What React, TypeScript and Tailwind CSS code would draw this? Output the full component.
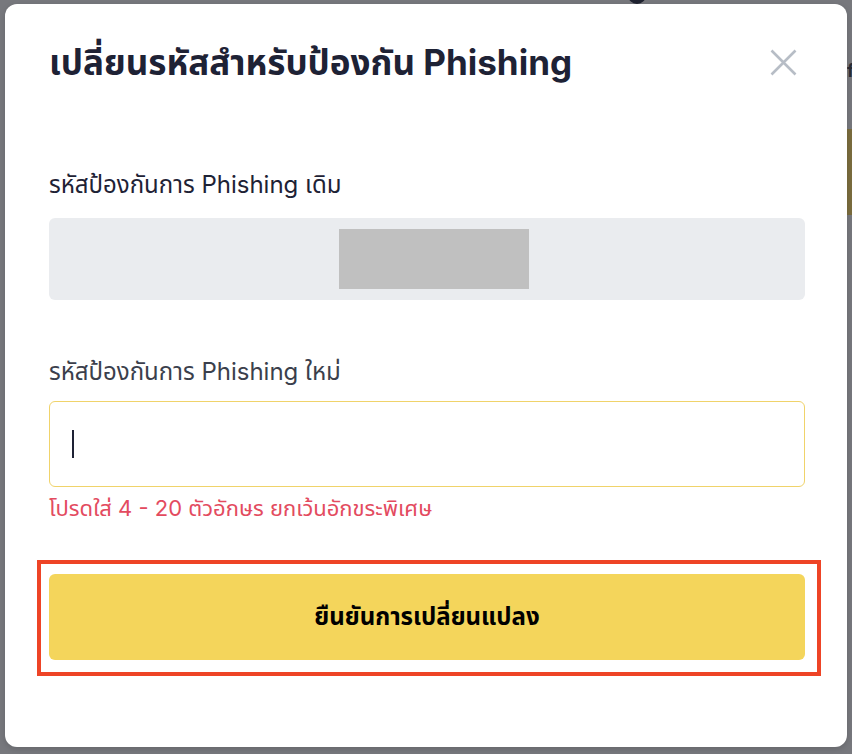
export default function App() {
  return (
    <div
      className="relative w-[852px] h-[754px] overflow-hidden bg-[#77787d]"
      style={{ fontFamily: 'Inter, "Noto Sans Thai", "Noto Sans", "DejaVu Sans", sans-serif' }}
    >
      {/* Page content peeking out behind the overlay */}
      <div className="absolute top-[-14px] left-[628px] w-[18px] h-[18px] rounded-full bg-[#1f2230]" />
      <div className="absolute top-[62px] left-[847px] text-[18px] font-bold text-[#2a2d36] leading-none">f</div>
      <div className="absolute top-[129px] left-[847px] w-[5px] h-[86px] bg-[#7b6d3e]" />

      <div className="relative flex justify-center pt-[4px]">
        <div className="w-[842px] h-[743px] rounded-[12px] bg-white shadow-[0_2px_6px_rgba(0,0,0,0.15)] pl-[44px] pr-[42px] pt-[38px]">
          {/* Header */}
          <div className="flex items-center justify-between">
            <h1 className="text-[35px] leading-[40px] font-bold text-[#1e2235]">
              เปลี่ยนรหัสสำหรับป้องกัน Phishing
            </h1>
            <button className="mr-[8px] text-[#b7bdc6]">
              <svg width="27" height="27" viewBox="0 0 27 27" fill="none" stroke="currentColor" strokeWidth="2.6">
                <path d="M1.5 1.5L25.5 25.5M25.5 1.5L1.5 25.5" />
              </svg>
            </button>
          </div>

          {/* Old code */}
          <div className="mt-[89px] text-[24px] leading-[28px] text-[#1e2235]">
            รหัสป้องกันการ Phishing เดิม
          </div>
          <div className="mt-[19px] h-[82px] rounded-[6px] bg-[#eaecef] flex items-center justify-center pl-[14px]">
            <div className="w-[190px] h-[60px] bg-[#c0c0c0]" />
          </div>

          {/* New code */}
          <div className="mt-[58px] text-[24px] leading-[28px] text-[#3b3f4c]">
            รหัสป้องกันการ Phishing ใหม่
          </div>
          <div className="mt-[15px] h-[86px] rounded-[6px] border border-[#f0d36a] flex items-center pl-[22px]">
            <div className="w-[2px] h-[28px] bg-[#1e2235]" />
          </div>
          <div className="mt-[9px] text-[22px] leading-[24px] text-[#e34b5f]">
            โปรดใส่ 4 - 20 ตัวอักษร ยกเว้นอักขระพิเศษ
          </div>

          {/* Confirm */}
          <div className="relative mt-[54px]">
            <button className="w-full h-[86px] rounded-[6px] bg-[#f4d55b] text-[24px] font-bold text-black">
              ยืนยันการเปลี่ยนแปลง
            </button>
            <div className="pointer-events-none absolute -left-[12px] -top-[14px] -right-[16px] -bottom-[16px] border-[4px] border-[#ee4426]" />
          </div>
        </div>
      </div>
    </div>
  )
}
